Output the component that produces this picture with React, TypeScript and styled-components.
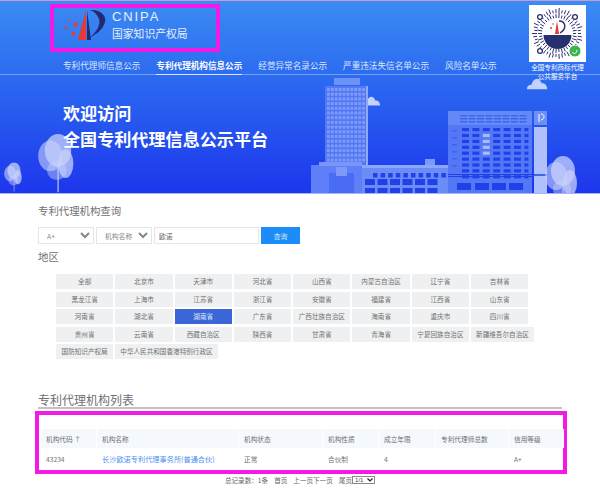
import React from "react";
import styled, { createGlobalStyle } from "styled-components";

const CJK = `"Noto Sans CJK SC", "Liberation Sans", sans-serif`;

const Global = createGlobalStyle`
  html, body { margin: 0; padding: 0; background: #fff; overflow: hidden; }
  body { font-family: ${CJK}; color: #666; }
  * { box-sizing: border-box; }
`;

const Page = styled.div`
  width: 600px;
  height: 504px;
  overflow: hidden;
`;

const Hero = styled.header`
  position: relative;
  height: 194px;
  background: linear-gradient(180deg, #3b8bf3 0%, #2a66f0 45%, #1d36ec 100%);
  border-top: 1px solid #c79ad0;
  border-bottom: 1px solid #a9b4f5;
  overflow: hidden;
`;

const Scenery = styled.svg`
  position: absolute;
  left: 0;
  top: -1px;
  width: 600px;
  height: 194px;
`;

const TopArea = styled.div`
  position: relative;
  height: 74px;
  display: flex;
  justify-content: space-between;
  border-bottom: 1px solid rgba(255, 255, 255, 0.35);
  padding: 3px 14px 0 50px;
`;

const LeftColumn = styled.div`
  display: flex;
  flex-direction: column;
`;

const Brand = styled.div`
  width: 170px;
  height: 48px;
  border: 4px solid #f21be6;
  display: flex;
  align-items: flex-start;
  padding: 0 0 0 8px;
  gap: 4px;
`;

const BrandText = styled.div`
  display: flex;
  flex-direction: column;
  color: #e6effd;
`;

const BrandLatin = styled.span`
  font-family: "Liberation Sans", sans-serif;
  font-size: 13px;
  line-height: 14px;
  letter-spacing: 1.9px;
  margin-top: 2px;
`;

const BrandCn = styled.span`
  font-size: 10.8px;
  line-height: 13px;
  margin-top: 3px;
`;

const Nav = styled.nav`
  display: flex;
  gap: 16px;
  margin: 6px 0 0 13px;
`;

const NavItem = styled.a<{ $active?: boolean }>`
  display: block;
  height: 17px;
  margin-bottom: -1px;
  font-size: 8.6px;
  line-height: 15px;
  white-space: nowrap;
  color: ${(p) => (p.$active ? "#ffffff" : "#dbe7fd")};
  font-weight: ${(p) => (p.$active ? 700 : 400)};
  border-bottom: ${(p) => (p.$active ? "1px solid #dfe7fd" : "1px solid transparent")};
`;

const QrColumn = styled.div`
  width: 57px;
  flex-shrink: 0;
  display: flex;
  flex-direction: column;
  align-items: center;
  margin-top: 1px;
`;

const QrBox = styled.svg`
  width: 57px;
  height: 57px;
  display: block;
  flex-shrink: 0;
`;

const QrCaption = styled.div`
  width: 70px;
  flex-shrink: 0;
  font-size: 6.6px;
  line-height: 9px;
  text-align: center;
  color: #fff;
  margin-top: 1px;
`;

const Welcome = styled.h1`
  position: relative;
  margin: 25px 0 0 63px;
  font-size: 17.1px;
  line-height: 26px;
  font-weight: 700;
  color: #fff;
`;

const Main = styled.main`
  padding: 10px 38px 0;
`;

const SectionLabel = styled.div`
  font-size: 10.4px;
  line-height: 14px;
  color: #707070;
`;

const SearchRow = styled.div`
  display: flex;
  gap: 2px;
  margin-top: 9px;
`;

const Select = styled.select`
  width: 56px;
  height: 17px;
  border: 1px solid #e6e6e6;
  background: #fff;
  color: #888;
  font-family: ${CJK};
  font-size: 6.8px;
  padding: 0 0 0 4px;
`;

const SearchInput = styled.input`
  width: 105px;
  height: 17px;
  border: 1px solid #e6e6e6;
  color: #666;
  font-family: ${CJK};
  font-size: 6.8px;
  padding: 0 4px;
  outline: none;
`;

const SearchButton = styled.button`
  width: 39px;
  height: 17px;
  border: 0;
  background: #1b8cf8;
  color: #cfe6ff;
  font-family: ${CJK};
  font-size: 6.8px;
  padding: 0;
`;

const RegionLabel = styled(SectionLabel)`
  margin-top: 6px;
`;

const Regions = styled.div`
  width: 484px;
  margin: 10px 0 0 18px;
  display: flex;
  flex-wrap: wrap;
  gap: 2.6px 2px;
`;

const Region = styled.div<{ $active?: boolean }>`
  min-width: 57.3px;
  height: 15px;
  padding: 0 5px;
  font-size: 6.6px;
  line-height: 15px;
  text-align: center;
  white-space: nowrap;
  background: ${(p) => (p.$active ? "#3a66d8" : "#eef0f2")};
  color: ${(p) => (p.$active ? "#dfe8fb" : "#707070")};
`;

const ListTitle = styled.h2`
  margin: 32px 0 0;
  height: 18px;
  font-size: 12px;
  line-height: 17px;
  font-weight: 400;
  color: #707070;
  border-bottom: 2px solid #c2c2c2;
`;

const TableFrame = styled.div`
  width: 532px;
  height: 63px;
  margin: 2px 0 0 -3px;
  border: 4px solid #f21be6;
  padding: 14px 0 0 1px;
`;

const Table = styled.table`
  width: 519px;
  table-layout: fixed;
  border-collapse: separate;
  border-spacing: 1.5px 0;
  font-size: 6.7px;
  color: #707070;
`;

const HeadCell = styled.th`
  height: 19px;
  padding: 0 0 0 5px;
  background: #f5f8fc;
  font-weight: 400;
  text-align: left;
  white-space: nowrap;
`;

const BodyCell = styled.td`
  height: 22px;
  padding: 0 0 0 5px;
  white-space: nowrap;
`;

const NameLink = styled.a`
  color: #4a8ef0;
  font-size: 7.2px;
`;

const Pager = styled.div`
  display: flex;
  align-items: center;
  justify-content: center;
  gap: 6px;
  height: 11px;
  font-size: 6.6px;
  color: #666;
`;

const PagerSelectBox = styled.span`
  position: relative;
  display: inline-flex;
  align-items: center;
  width: 23px;
  height: 8px;
  margin-left: -6px;
  border: 1px solid #888;
  background: #fff;
`;

const PagerSelect = styled.select`
  appearance: none;
  width: 100%;
  height: 100%;
  border: 0;
  background: transparent;
  padding: 0 0 0 2px;
  font-family: "Liberation Sans", sans-serif;
  font-size: 6px;
  line-height: 6px;
  color: #444;
`;

const PagerArrow = styled.svg`
  position: absolute;
  right: 1px;
  top: 1px;
  width: 6px;
  height: 4px;
`;

const Logo = () => (
  <svg width="46" height="34" viewBox="0 0 46 34">
    <path d="M24 2 L16 32 L24 32 Z" fill="#e23a35" />
    <path d="M25 2 L25 32 L29 32 Z" fill="#25296f" />
    <path d="M28 2 C38 1 45 8 43 14 C41 22 33 27 27 30 C34 25 39 17 37 11 C35 6 32 3 28 2 Z" fill="#25296f" />
    <g fill="#e0403c">
      <path d="M13 13 l1.2 2.2 2.6-.4 -1.6 2 1.1 2.2 -2.5-.9 -1.9 1.6 .3-2.5 -2.2-1.3 2.6-.5 Z" />
      <path d="M11 22.5 l1 1.9 2.3-.3 -1.5 1.7 1 2 -2.2-.9 -1.8 1.5 .2-2.3 -2-1.2 2.3-.5 Z" />
      <circle cx="4" cy="20" r="1.4" />
      <circle cx="8" cy="13" r="1.1" />
      <circle cx="14" cy="8" r="0.8" />
    </g>
  </svg>
);

const Tree = ({ x, y, s }: { x: number; y: number; s: number }) => (
  <g transform={`translate(${x} ${y}) scale(${s})`} fill="#c8d2fb">
    <rect x="19.5" y="26" width="1.2" height="26" opacity="0.85" />
    <ellipse cx="13" cy="19" rx="11" ry="14" opacity="0.6" />
    <ellipse cx="20" cy="14" rx="12" ry="15" opacity="0.75" />
    <ellipse cx="27" cy="26" rx="7" ry="13" opacity="0.75" />
    <ellipse cx="19" cy="32" rx="9" ry="9" opacity="0.45" />
  </g>
);

const Cloud = ({ x, y, s }: { x: number; y: number; s: number }) => (
  <path
    transform={`translate(${x} ${y}) scale(${s})`}
    d="M0 10 C0 7 2 6 4 6 C5 2 8 0 10 1 C12 2 13 4 13 5 C15 4 18 6 18 10 Z"
    fill="#c3d2fb"
  />
);

const range = (n: number) => Array.from({ length: n }, (_, i) => i);

const Scene = () => (
  <Scenery viewBox="0 0 600 194">
    <Tree x={36} y={135} s={1.1} />
    <Tree x={3} y={163} s={0.55} />
    <Cloud x={527} y={78} s={1.12} />
    <Cloud x={363} y={96} s={0.95} />

    {/* tower */}
    <rect x="334" y="78" width="26" height="7" fill="#6d93f6" />
    <rect x="325" y="86" width="43" height="80" fill="#5278f5" />
    <rect x="366" y="86" width="2" height="80" fill="#90a9f8" />
    {range(10).flatMap((c) =>
      range(16).map((r) => (
        <rect key={`t${c}-${r}`} x={327 + c * 3.9} y={88 + r * 4.7} width="2.8" height="3" fill="#7e9bf7" />
      ))
    )}

    {/* lobby */}
    <rect x="311" y="165" width="51" height="29" fill="#5e7ff7" />
    <rect x="319" y="162" width="43" height="4" fill="#7a96f8" />
    <rect x="329" y="173" width="25" height="21" fill="#4a6cf4" />
    <rect x="336" y="167" width="11" height="9" fill="#7e99f8" />

    {/* low block */}
    <rect x="362" y="165" width="91" height="29" fill="#6a8cf7" />
    <rect x="425" y="159" width="10" height="6" fill="#7e9af8" />
    <rect x="362" y="165" width="91" height="3" fill="#8ea8f9" />
    {range(12).map((c) => (
      <rect key={`s${c}`} x={373 + c * 7.6} y={173} width="4.5" height="4.5" fill="#2140ea" />
    ))}
    {range(6).flatMap((c) =>
      [179, 188].map((y) => (
        <rect key={`l${c}-${y}`} x={365 + c * 12.5} y={y} width="10" height="6" fill="#2140ea" />
      ))
    )}

    {/* right block */}
    <rect x="448" y="111" width="84" height="83" fill="#5478f5" />
    <rect x="448" y="111" width="84" height="14" fill="#6389f6" />
    {range(8).flatMap((c) =>
      [115, 118, 121].map((y) => (
        <rect key={`h${c}-${y}`} x={460 + c * 8.5} y={y} width="7" height="1.4" fill="#3e63ee" />
      ))
    )}
    {range(7).flatMap((c) =>
      range(9).map((r) => (
        <rect
          key={`w${c}-${r}`}
          x={462 + c * 10.4}
          y={128 + r * 5.9}
          width={c === 6 ? 4 : 7}
          height="3.2"
          fill={c === 2 && r > 0 && r < 5 ? "#a7bafa" : "#2140ea"}
        />
      ))
    )}
    {range(6).map((r) => (
      <rect key={`m${r}`} x="452" y={130 + r * 7} width="5" height="1.5" fill="#3e63ee" />
    ))}
    <rect x="448" y="174" width="84" height="1" fill="#2140ea" />
    <rect x="448" y="176" width="84" height="1" fill="#2140ea" />
    {[457, 475, 492, 509].map((x) => (
      <rect key={x} x={x} y="183" width="14" height="7" fill="#2140ea" />
    ))}

    {/* pillar */}
    <rect x="534" y="111" width="13" height="14" fill="#6d90f6" />
    <path d="M539 114 v8 M541 114 c4 0 4 5 0 6" stroke="#fff" strokeWidth="1" fill="none" />
    <rect x="534" y="127" width="13" height="67" fill="#b0c0fa" />
    <rect x="534" y="174" width="13" height="2" fill="#3e63ee" />
    <Tree x={543} y={157} s={1} />
  </Scenery>
);

const Qr = () => {
  const rays = [
    { r: 20.5, n: 46, l: 3 },
    { r: 15.5, n: 38, l: 3 },
  ];
  return (
    <QrBox viewBox="0 0 57 57">
      <rect width="57" height="57" fill="#fff" />
      <g stroke="#2d2f72" strokeWidth="1">
        {rays.flatMap((ring, ri) =>
          range(ring.n).map((i) => {
            const a = (i / ring.n) * Math.PI * 2;
            const l = ring.l + ((i * 7) % 3);
            return (
              <line
                key={`${ri}-${i}`}
                x1={28.5 + Math.cos(a) * ring.r}
                y1={28.5 + Math.sin(a) * ring.r}
                x2={28.5 + Math.cos(a) * (ring.r + l)}
                y2={28.5 + Math.sin(a) * (ring.r + l)}
              />
            );
          })
        )}
      </g>
      {[
        [11, 12],
        [46, 12],
        [11, 46],
      ].map(([x, y]) => (
        <circle key={x * 100 + y} cx={x} cy={y} r="2.4" fill="#fff" stroke="#2d2f72" strokeWidth="1.3" />
      ))}
      <circle cx="28.5" cy="28.5" r="14" fill="#fff" />
      <path d="M14.5 30 H42.5 A14 14 0 0 1 14.5 30 Z" fill="#27306f" />
      <path d="M28 16 L26 29 H30 Z" fill="#e23a35" />
      <path d="M30 16 C37 16 38 24 31 28" fill="none" stroke="#27306f" strokeWidth="1.4" />
      <circle cx="22" cy="23" r="1" fill="#e23a35" />
      <circle cx="24" cy="19" r="0.8" fill="#e23a35" />
      <circle cx="46" cy="46" r="6" fill="#3cb64a" stroke="#fff" strokeWidth="1" />
      <path d="M43.5 47 C44 49 47 49 47.5 46.5 L48 45" fill="none" stroke="#fff" strokeWidth="1" />
    </QrBox>
  );
};

const navItems = ["专利代理师信息公示", "专利代理机构信息公示", "经营异常名录公示", "严重违法失信名单公示", "风险名单公示"];

const regions = [
  "全部", "北京市", "天津市", "河北省", "山西省", "内蒙古自治区", "辽宁省", "吉林省",
  "黑龙江省", "上海市", "江苏省", "浙江省", "安徽省", "福建省", "江西省", "山东省",
  "河南省", "湖北省", "湖南省", "广东省", "广西壮族自治区", "海南省", "重庆市", "四川省",
  "贵州省", "云南省", "西藏自治区", "陕西省", "甘肃省", "青海省", "宁夏回族自治区", "新疆维吾尔自治区",
  "国防知识产权局", "中华人民共和国香港特别行政区",
];

const columns: [string, number][] = [
  ["机构代码 ↑", 55],
  ["机构名称", 141],
  ["机构状态", 83],
  ["机构性质", 55],
  ["成立年限", 56],
  ["专利代理师总数", 72],
  ["信用等级", 55],
];

export default function App() {
  return (
    <Page>
      <Global />
      <Hero>
        <Scene />
        <TopArea>
          <LeftColumn>
            <Brand>
              <Logo />
              <BrandText>
                <BrandLatin>CNIPA</BrandLatin>
                <BrandCn>国家知识产权局</BrandCn>
              </BrandText>
            </Brand>
            <Nav>
              {navItems.map((item, i) => (
                <NavItem key={item} $active={i === 1}>
                  {item}
                </NavItem>
              ))}
            </Nav>
          </LeftColumn>
          <QrColumn>
            <Qr />
            <QrCaption>
              全国专利商标代理
              <br />
              公共服务平台
            </QrCaption>
          </QrColumn>
        </TopArea>
        <Welcome>
          欢迎访问
          <br />
          全国专利代理信息公示平台
        </Welcome>
      </Hero>
      <Main>
        <SectionLabel>专利代理机构查询</SectionLabel>
        <SearchRow>
          <Select defaultValue="A+">
            <option>A+</option>
          </Select>
          <Select defaultValue="机构名称">
            <option>机构名称</option>
          </Select>
          <SearchInput defaultValue="欧诺" />
          <SearchButton>查询</SearchButton>
        </SearchRow>
        <RegionLabel>地区</RegionLabel>
        <Regions>
          {regions.map((r) => (
            <Region key={r} $active={r === "湖南省"}>
              {r}
            </Region>
          ))}
        </Regions>
        <ListTitle>专利代理机构列表</ListTitle>
        <TableFrame>
          <Table>
            <colgroup>
              {columns.map(([name, w]) => (
                <col key={name} style={{ width: w }} />
              ))}
            </colgroup>
            <thead>
              <tr>
                {columns.map(([name]) => (
                  <HeadCell key={name}>{name}</HeadCell>
                ))}
              </tr>
            </thead>
            <tbody>
              <tr>
                <BodyCell>43234</BodyCell>
                <BodyCell>
                  <NameLink>长沙欧诺专利代理事务所(普通合伙)</NameLink>
                </BodyCell>
                <BodyCell>正常</BodyCell>
                <BodyCell>合伙制</BodyCell>
                <BodyCell>4</BodyCell>
                <BodyCell />
                <BodyCell>A+</BodyCell>
              </tr>
            </tbody>
          </Table>
        </TableFrame>
        <Pager>
          <span>总记录数：1条</span>
          <span>首页</span>
          <span>上一页下一页</span>
          <span>尾页</span>
          <PagerSelectBox>
            <PagerSelect defaultValue="1/1">
              <option>1/1</option>
            </PagerSelect>
            <PagerArrow viewBox="0 0 6 4">
              <path d="M0.5 0.5 L3 3 L5.5 0.5" fill="none" stroke="#222" strokeWidth="1.2" />
            </PagerArrow>
          </PagerSelectBox>
        </Pager>
      </Main>
    </Page>
  );
}
